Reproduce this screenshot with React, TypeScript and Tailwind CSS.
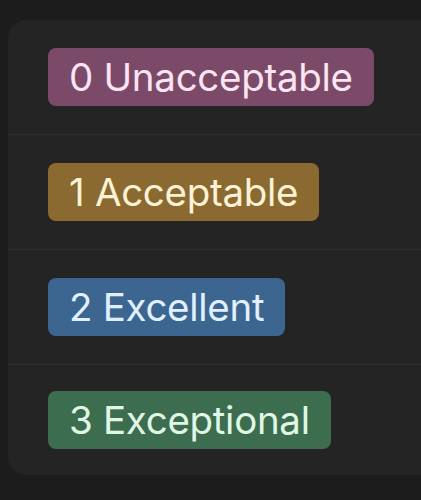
const LEVELS = [
  { label: "0 Unacceptable", badge: "bg-[#7c4a69] text-[#fbe4f1]" },
  { label: "1 Acceptable", badge: "bg-[#8a6a30] text-[#fdf2d6]" },
  { label: "2 Excellent", badge: "bg-[#3c6590] text-[#e0f0ff]" },
  { label: "3 Exceptional", badge: "bg-[#3c6d4e] text-[#e0f7e8]" },
];

export default function App() {
  return (
    <div
      className="h-[500px] w-[421px] overflow-hidden bg-[#1c1c1c] pt-[20px] pl-[8px]"
      style={{ fontFamily: "Inter, Roboto, sans-serif" }}
    >
      <div className="-mr-6 rounded-l-[18px] bg-[#242424]">
        {LEVELS.map((lvl, i) => {
          const last = i === LEVELS.length - 1;
          return (
            <div
              key={lvl.label}
              className={`flex items-center pl-[40px] ${
                last ? "h-[110px]" : "h-[115px] border-b border-[#2f2f2f]"
              }`}
            >
              <span
                className={`rounded-[8px] px-[21px] h-[58px] flex items-center text-[38.5px] leading-none tracking-[-0.3px] ${lvl.badge}`}
              >
                {lvl.label}
              </span>
            </div>
          );
        })}
      </div>
    </div>
  );
}
